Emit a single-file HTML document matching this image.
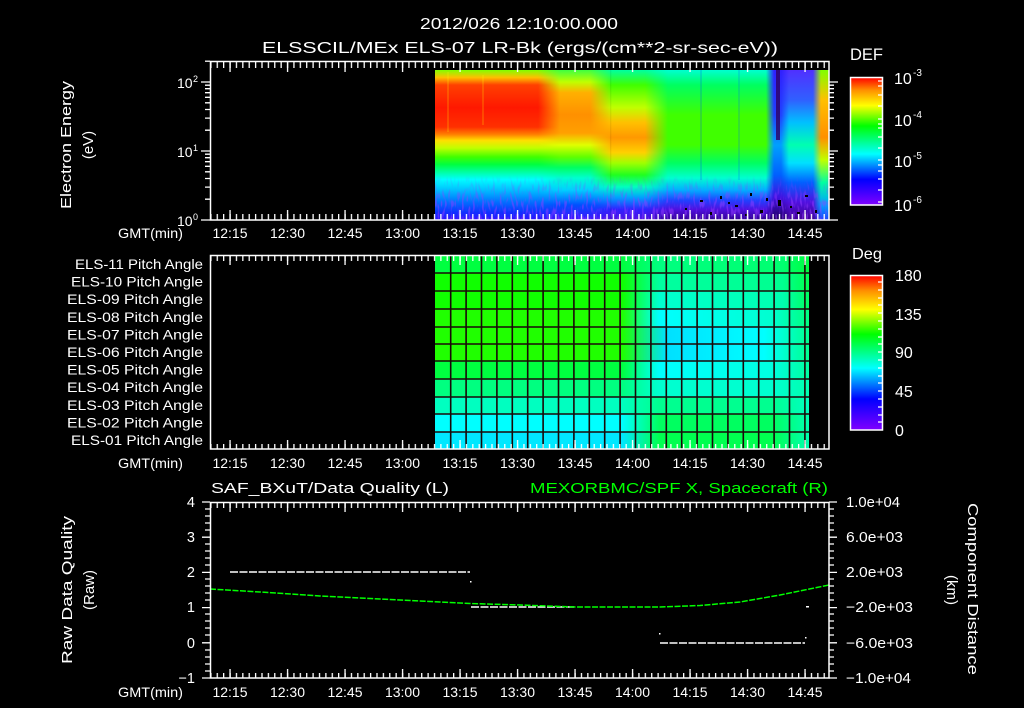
<!DOCTYPE html>
<html><head><meta charset="utf-8"><style>
html,body{margin:0;padding:0;background:#000;}
svg{display:block;}
text{font-family:"Liberation Sans",sans-serif;fill:#fff;}
</style></head><body>
<svg width="1024" height="708" viewBox="0 0 1024 708" xmlns="http://www.w3.org/2000/svg">
<defs>
<pattern id="mn" patternUnits="userSpaceOnUse" x="229.4" y="0" width="6.389" height="800"><rect x="0" y="0" width="1.3" height="800" fill="#fff"/></pattern>
<pattern id="mj" patternUnits="userSpaceOnUse" x="229.4" y="0" width="57.5" height="800"><rect x="0" y="0" width="1.3" height="800" fill="#fff"/></pattern>
<linearGradient id="gA" x1="0" y1="0" x2="0" y2="1">
<stop offset="0" stop-color="#80ff00"/><stop offset=".05" stop-color="#ffc000"/><stop offset=".1" stop-color="#ff4000"/><stop offset=".25" stop-color="#ff1800"/><stop offset=".38" stop-color="#ff3000"/><stop offset=".43" stop-color="#ff8000"/><stop offset=".47" stop-color="#ffe000"/><stop offset=".52" stop-color="#c0ff00"/><stop offset=".58" stop-color="#40ff00"/><stop offset=".63" stop-color="#00ff40"/><stop offset=".68" stop-color="#00ffa0"/><stop offset=".73" stop-color="#00ffff"/><stop offset=".8" stop-color="#00c0ff"/><stop offset=".88" stop-color="#0070ff"/><stop offset=".95" stop-color="#1030ff"/><stop offset="1" stop-color="#3010ff"/></linearGradient>
<linearGradient id="gB" x1="0" y1="0" x2="0" y2="1">
<stop offset="0" stop-color="#40ff40"/><stop offset=".08" stop-color="#c0ff00"/><stop offset=".15" stop-color="#ffb000"/><stop offset=".3" stop-color="#ff9000"/><stop offset=".42" stop-color="#ffa000"/><stop offset=".5" stop-color="#e0ff00"/><stop offset=".58" stop-color="#60ff00"/><stop offset=".65" stop-color="#00ff60"/><stop offset=".72" stop-color="#00ffd0"/><stop offset=".8" stop-color="#00d0ff"/><stop offset=".9" stop-color="#0050ff"/><stop offset="1" stop-color="#4010ff"/></linearGradient>
<linearGradient id="gC" x1="0" y1="0" x2="0" y2="1">
<stop offset="0" stop-color="#00ffa0"/><stop offset=".1" stop-color="#40ff00"/><stop offset=".25" stop-color="#c0ff00"/><stop offset=".35" stop-color="#ffc000"/><stop offset=".45" stop-color="#ff9800"/><stop offset=".55" stop-color="#ffd000"/><stop offset=".62" stop-color="#a0ff00"/><stop offset=".7" stop-color="#20ff20"/><stop offset=".78" stop-color="#00ffc0"/><stop offset=".85" stop-color="#00a0ff"/><stop offset=".93" stop-color="#3020ff"/><stop offset="1" stop-color="#5010e0"/></linearGradient>
<linearGradient id="gD" x1="0" y1="0" x2="0" y2="1">
<stop offset="0" stop-color="#00ffd0"/><stop offset=".1" stop-color="#00ff60"/><stop offset=".3" stop-color="#40ff00"/><stop offset=".5" stop-color="#40ff00"/><stop offset=".62" stop-color="#00ff60"/><stop offset=".72" stop-color="#00ffd0"/><stop offset=".8" stop-color="#00b0ff"/><stop offset=".87" stop-color="#2040ff"/><stop offset=".93" stop-color="#5010e0"/><stop offset="1" stop-color="#300090"/></linearGradient>
<linearGradient id="gE" x1="0" y1="0" x2="0" y2="1">
<stop offset="0" stop-color="#3020ff"/><stop offset=".3" stop-color="#2040ff"/><stop offset=".5" stop-color="#00a0ff"/><stop offset=".7" stop-color="#0060ff"/><stop offset=".85" stop-color="#4010e0"/><stop offset="1" stop-color="#200060"/></linearGradient>
<linearGradient id="gF" x1="0" y1="0" x2="0" y2="1">
<stop offset="0" stop-color="#5030ff"/><stop offset=".2" stop-color="#3060ff"/><stop offset=".35" stop-color="#00c0ff"/><stop offset=".5" stop-color="#00ffb0"/><stop offset=".62" stop-color="#00e0ff"/><stop offset=".75" stop-color="#0060ff"/><stop offset=".88" stop-color="#5010e0"/><stop offset="1" stop-color="#400090"/></linearGradient>
<linearGradient id="gG" x1="0" y1="0" x2="0" y2="1">
<stop offset="0" stop-color="#80ff00"/><stop offset=".2" stop-color="#ffc000"/><stop offset=".45" stop-color="#ff9000"/><stop offset=".6" stop-color="#c0ff00"/><stop offset=".75" stop-color="#00ffa0"/><stop offset=".9" stop-color="#00a0ff"/><stop offset="1" stop-color="#2040ff"/></linearGradient>
<linearGradient id="fB" gradientUnits="userSpaceOnUse" x1="538" y1="0" x2="560" y2="0"><stop offset="0" stop-color="#000"/><stop offset="1" stop-color="#fff"/></linearGradient>
<linearGradient id="fC" gradientUnits="userSpaceOnUse" x1="590" y1="0" x2="612" y2="0"><stop offset="0" stop-color="#000"/><stop offset="1" stop-color="#fff"/></linearGradient>
<linearGradient id="fD" gradientUnits="userSpaceOnUse" x1="645" y1="0" x2="668" y2="0"><stop offset="0" stop-color="#000"/><stop offset="1" stop-color="#fff"/></linearGradient>
<linearGradient id="fE" gradientUnits="userSpaceOnUse" x1="766" y1="0" x2="774" y2="0"><stop offset="0" stop-color="#000"/><stop offset="1" stop-color="#fff"/></linearGradient>
<linearGradient id="fF" gradientUnits="userSpaceOnUse" x1="781" y1="0" x2="789" y2="0"><stop offset="0" stop-color="#000"/><stop offset="1" stop-color="#fff"/></linearGradient>
<linearGradient id="fG" gradientUnits="userSpaceOnUse" x1="813" y1="0" x2="821" y2="0"><stop offset="0" stop-color="#000"/><stop offset="1" stop-color="#fff"/></linearGradient>
<mask id="mB" maskUnits="userSpaceOnUse" x="0" y="0" width="1024" height="708"><rect x="538" y="70" width="72" height="150" fill="url(#fB)"/></mask>
<mask id="mC" maskUnits="userSpaceOnUse" x="0" y="0" width="1024" height="708"><rect x="590" y="70" width="78" height="150" fill="url(#fC)"/></mask>
<mask id="mD" maskUnits="userSpaceOnUse" x="0" y="0" width="1024" height="708"><rect x="645" y="70" width="130" height="150" fill="url(#fD)"/></mask>
<mask id="mE" maskUnits="userSpaceOnUse" x="0" y="0" width="1024" height="708"><rect x="766" y="70" width="24" height="150" fill="url(#fE)"/></mask>
<mask id="mF" maskUnits="userSpaceOnUse" x="0" y="0" width="1024" height="708"><rect x="781" y="70" width="40" height="150" fill="url(#fF)"/></mask>
<mask id="mG" maskUnits="userSpaceOnUse" x="0" y="0" width="1024" height="708"><rect x="813" y="70" width="16" height="150" fill="url(#fG)"/></mask>
<linearGradient id="nf" x1="0" y1="0" x2="0" y2="1"><stop offset="0" stop-color="#000"/><stop offset=".6" stop-color="#fff"/><stop offset="1" stop-color="#fff"/></linearGradient>
<mask id="mN" maskUnits="userSpaceOnUse" x="0" y="0" width="1024" height="708"><rect x="435" y="175" width="394" height="45" fill="url(#nf)"/></mask>
<filter id="noise" x="0" y="0" width="100%" height="100%">
<feTurbulence type="fractalNoise" baseFrequency="0.45 0.12" numOctaves="1" seed="3"/>
<feColorMatrix type="matrix" values="0 0 0 0 0.3  0 0 0 0 0.05  0 0 0 0 1  6 0 0 0 -3"/>
</filter>
<linearGradient id="cb" x1="0" y1="1" x2="0" y2="0">
<stop offset="0" stop-color="#8000ff"/><stop offset=".2" stop-color="#0000ff"/><stop offset=".4" stop-color="#00ffff"/><stop offset=".62" stop-color="#00ff00"/><stop offset=".78" stop-color="#ffff00"/><stop offset=".9" stop-color="#ff9000"/><stop offset="1" stop-color="#ff0000"/></linearGradient>
<linearGradient id="r1" gradientUnits="userSpaceOnUse" x1="435" y1="0" x2="809" y2="0"><stop offset=".5" stop-color="#00ff40"/><stop offset=".6" stop-color="#00ff80"/><stop offset=".93" stop-color="#00ff70"/><stop offset="1" stop-color="#00ff40"/></linearGradient>
<linearGradient id="r2" gradientUnits="userSpaceOnUse" x1="435" y1="0" x2="809" y2="0"><stop offset=".5" stop-color="#10ff00"/><stop offset=".6" stop-color="#00ffa0"/><stop offset=".93" stop-color="#00ff90"/><stop offset="1" stop-color="#00ff50"/></linearGradient>
<linearGradient id="r3" gradientUnits="userSpaceOnUse" x1="435" y1="0" x2="809" y2="0"><stop offset=".5" stop-color="#10ff00"/><stop offset=".6" stop-color="#00ffd0"/><stop offset=".93" stop-color="#00ffb0"/><stop offset="1" stop-color="#00ff60"/></linearGradient>
<linearGradient id="r4" gradientUnits="userSpaceOnUse" x1="435" y1="0" x2="809" y2="0"><stop offset=".5" stop-color="#20ff00"/><stop offset=".6" stop-color="#00ffff"/><stop offset=".9" stop-color="#00ffd0"/><stop offset="1" stop-color="#00ff80"/></linearGradient>
<linearGradient id="r5" gradientUnits="userSpaceOnUse" x1="435" y1="0" x2="809" y2="0"><stop offset=".5" stop-color="#20ff00"/><stop offset=".62" stop-color="#00e0ff"/><stop offset=".88" stop-color="#00ffff"/><stop offset="1" stop-color="#00ff90"/></linearGradient>
<linearGradient id="r6" gradientUnits="userSpaceOnUse" x1="435" y1="0" x2="809" y2="0"><stop offset=".5" stop-color="#20ff00"/><stop offset=".62" stop-color="#00e0ff"/><stop offset=".88" stop-color="#00ffff"/><stop offset="1" stop-color="#00ff90"/></linearGradient>
<linearGradient id="r7" gradientUnits="userSpaceOnUse" x1="435" y1="0" x2="809" y2="0"><stop offset=".5" stop-color="#00ff40"/><stop offset=".6" stop-color="#00ffff"/><stop offset=".9" stop-color="#00ffe0"/><stop offset="1" stop-color="#00ffa0"/></linearGradient>
<linearGradient id="r8" gradientUnits="userSpaceOnUse" x1="435" y1="0" x2="809" y2="0"><stop offset=".5" stop-color="#00ff80"/><stop offset=".6" stop-color="#00ffd0"/><stop offset=".9" stop-color="#00ffd0"/><stop offset="1" stop-color="#00ffb0"/></linearGradient>
<linearGradient id="r9" gradientUnits="userSpaceOnUse" x1="435" y1="0" x2="809" y2="0"><stop offset=".5" stop-color="#00ffc0"/><stop offset=".6" stop-color="#00ff90"/><stop offset=".9" stop-color="#00ff90"/><stop offset="1" stop-color="#00ffc0"/></linearGradient>
<linearGradient id="r10" gradientUnits="userSpaceOnUse" x1="435" y1="0" x2="809" y2="0"><stop offset=".5" stop-color="#00ffff"/><stop offset=".6" stop-color="#00ff60"/><stop offset=".9" stop-color="#00ff60"/><stop offset="1" stop-color="#00ffb0"/></linearGradient>
<linearGradient id="r11" gradientUnits="userSpaceOnUse" x1="435" y1="0" x2="809" y2="0"><stop offset=".5" stop-color="#00e8ff"/><stop offset=".6" stop-color="#00ff50"/><stop offset=".9" stop-color="#00ff50"/><stop offset="1" stop-color="#00ffb0"/></linearGradient>
</defs>

<text x="420" y="29" font-size="16" textLength="198" lengthAdjust="spacingAndGlyphs">2012/026 12:10:00.000</text>
<text x="262" y="53" font-size="16" textLength="516" lengthAdjust="spacingAndGlyphs">ELSSCIL/MEx ELS-07 LR-Bk  (ergs/(cm**2-sr-sec-eV))</text>

<rect x="435" y="70" width="125" height="150" fill="url(#gA)"/>
<rect x="538" y="70" width="74" height="150" fill="url(#gB)" mask="url(#mB)"/>
<rect x="590" y="70" width="78" height="150" fill="url(#gC)" mask="url(#mC)"/>
<rect x="645" y="70" width="130" height="150" fill="url(#gD)" mask="url(#mD)"/>
<rect x="766" y="70" width="24" height="150" fill="url(#gE)" mask="url(#mE)"/>
<rect x="781" y="70" width="40" height="150" fill="url(#gF)" mask="url(#mF)"/>
<rect x="813" y="70" width="16" height="150" fill="url(#gG)" mask="url(#mG)"/>
<g opacity=".18">
<rect x="447" y="72" width="2" height="60" fill="#ffff00"/>
<rect x="482" y="75" width="2" height="50" fill="#ffff00"/>
<rect x="700" y="70" width="2" height="110" fill="#0040ff"/>
<rect x="738" y="70" width="2" height="110" fill="#0060ff"/>
</g>
<g mask="url(#mN)"><rect x="435" y="175" width="394" height="45" filter="url(#noise)" opacity=".5"/></g>
<rect x="776" y="70" width="4" height="70" fill="#300060" opacity=".8"/>
<g fill="#000">
<rect x="700" y="200" width="3" height="2"/><rect x="720" y="196" width="2" height="3"/><rect x="735" y="205" width="3" height="2"/>
<rect x="750" y="193" width="2" height="3"/><rect x="760" y="210" width="3" height="3"/><rect x="778" y="200" width="3" height="6"/>
<rect x="790" y="206" width="2" height="2"/><rect x="805" y="195" width="3" height="2"/><rect x="815" y="210" width="2" height="3"/>
<rect x="745" y="214" width="3" height="2"/><rect x="710" y="212" width="2" height="3"/><rect x="685" y="208" width="2" height="2"/>
<rect x="728" y="202" width="2" height="2"/><rect x="766" y="198" width="2" height="3"/><rect x="797" y="212" width="3" height="2"/>
</g>
<rect x="210.5" y="61.5" width="618.5" height="158.5" fill="none" stroke="#fff" stroke-width="1.5"/>
<rect x="210" y="62" width="619" height="6" fill="url(#mn)"/>
<rect x="210" y="62" width="619" height="10" fill="url(#mj)"/>
<rect x="210" y="214" width="619" height="6" fill="url(#mn)"/>
<rect x="210" y="210" width="619" height="10" fill="url(#mj)"/>
<g stroke="#fff" stroke-width="1.3">
<path d="M201 220H210M201 151H210M201 82H210"/>
<path d="M205 199.2H210M205 187.1H210M205 178.5H210M205 171.8H210M205 166.3H210M205 161.7H210M205 157.7H210M205 154.2H210"/>
<path d="M205 130.2H210M205 118.1H210M205 109.5H210M205 102.8H210M205 97.3H210M205 92.7H210M205 88.7H210M205 85.2H210"/>
<path d="M205 61.2H210"/>
<path d="M829 220H838M829 151H838M829 82H838"/>
<path d="M829 199.2H834M829 187.1H834M829 178.5H834M829 171.8H834M829 166.3H834M829 161.7H834M829 157.7H834M829 154.2H834"/>
<path d="M829 130.2H834M829 118.1H834M829 109.5H834M829 102.8H834M829 97.3H834M829 92.7H834M829 88.7H834M829 85.2H834"/>
</g>
<text x="177" y="88" font-size="14">10</text><text x="193" y="82" font-size="9">2</text>
<text x="177" y="157" font-size="14">10</text><text x="193" y="151" font-size="9">1</text>
<text x="177" y="226" font-size="14">10</text><text x="193" y="220" font-size="9">0</text>
<text transform="translate(71,145) rotate(-90)" text-anchor="middle" font-size="15" textLength="128" lengthAdjust="spacingAndGlyphs">Electron Energy</text>
<text transform="translate(93,145) rotate(-90)" text-anchor="middle" font-size="15">(eV)</text>

<rect x="850.5" y="77.5" width="32" height="127.5" fill="url(#cb)" stroke="#fff" stroke-width="1.5"/>
<g stroke="#fff" stroke-width="1.2">
<path d="M878 81H882M878 86H882M878 95H882M878 106H882M878 119H882M878 124H882M878 128H882M878 137H882M878 148H882M878 160H882M878 165H882M878 171H882M878 179H882M878 190H882M878 202H882"/>
</g>
<text x="850" y="60" font-size="17" textLength="33" lengthAdjust="spacingAndGlyphs">DEF</text>
<text x="894" y="84" font-size="16">10</text><text x="913" y="76" font-size="10">-3</text>
<text x="894" y="126" font-size="16">10</text><text x="913" y="118" font-size="10">-4</text>
<text x="894" y="167" font-size="16">10</text><text x="913" y="159" font-size="10">-5</text>
<text x="894" y="211" font-size="16">10</text><text x="913" y="203" font-size="10">-6</text>

<g font-size="14" text-anchor="middle">
<text x="230" y="238">12:15</text><text x="287.5" y="238">12:30</text><text x="345" y="238">12:45</text><text x="402.5" y="238">13:00</text><text x="460" y="238">13:15</text><text x="517.5" y="238">13:30</text><text x="575" y="238">13:45</text><text x="632.5" y="238">14:00</text><text x="690" y="238">14:15</text><text x="747.5" y="238">14:30</text><text x="805" y="238">14:45</text>
</g>
<text x="118" y="238" font-size="14" textLength="65" lengthAdjust="spacingAndGlyphs">GMT(min)</text>

<rect x="435" y="256" width="374" height="17" fill="url(#r1)"/>
<rect x="435" y="273" width="374" height="18" fill="url(#r2)"/>
<rect x="435" y="291" width="374" height="18" fill="url(#r3)"/>
<rect x="435" y="309" width="374" height="18" fill="url(#r4)"/>
<rect x="435" y="327" width="374" height="17" fill="url(#r5)"/>
<rect x="435" y="344" width="374" height="17" fill="url(#r6)"/>
<rect x="435" y="361" width="374" height="18" fill="url(#r7)"/>
<rect x="435" y="379" width="374" height="18" fill="url(#r8)"/>
<rect x="435" y="397" width="374" height="17" fill="url(#r9)"/>
<rect x="435" y="414" width="374" height="18" fill="url(#r10)"/>
<rect x="435" y="432" width="374" height="17" fill="url(#r11)"/>
<g stroke="#1a0808" stroke-width="1.6">
<path d="M435 273H809M435 291H809M435 309H809M435 327H809M435 344H809M435 361H809M435 379H809M435 397H809M435 414H809M435 432H809"/>
<path d="M450.7 256V449M466.1 256V449M481.5 256V449M496.9 256V449M512.3 256V449M527.7 256V449M543.1 256V449M558.5 256V449M573.9 256V449M589.3 256V449M604.7 256V449M620.1 256V449M635.5 256V449M650.9 256V449M666.3 256V449M681.7 256V449M697.1 256V449M712.5 256V449M727.9 256V449M743.3 256V449M758.7 256V449M774.1 256V449M789.5 256V449M804.9 256V449"/>
</g>
<rect x="210.5" y="255.5" width="618.5" height="193.5" fill="none" stroke="#fff" stroke-width="1.5"/>
<rect x="210" y="256" width="619" height="5" fill="url(#mn)"/>
<rect x="210" y="256" width="619" height="9" fill="url(#mj)"/>
<rect x="210" y="444" width="619" height="5" fill="url(#mn)"/>
<rect x="210" y="440" width="619" height="9" fill="url(#mj)"/>

<g font-size="14" text-anchor="end">
<text x="203" y="269" textLength="128" lengthAdjust="spacingAndGlyphs">ELS-11 Pitch Angle</text>
<text x="203" y="286.6" textLength="132" lengthAdjust="spacingAndGlyphs">ELS-10 Pitch Angle</text>
<text x="203" y="304.2" textLength="136" lengthAdjust="spacingAndGlyphs">ELS-09 Pitch Angle</text>
<text x="203" y="321.8" textLength="136" lengthAdjust="spacingAndGlyphs">ELS-08 Pitch Angle</text>
<text x="203" y="339.4" textLength="136" lengthAdjust="spacingAndGlyphs">ELS-07 Pitch Angle</text>
<text x="203" y="357" textLength="136" lengthAdjust="spacingAndGlyphs">ELS-06 Pitch Angle</text>
<text x="203" y="374.6" textLength="136" lengthAdjust="spacingAndGlyphs">ELS-05 Pitch Angle</text>
<text x="203" y="392.2" textLength="136" lengthAdjust="spacingAndGlyphs">ELS-04 Pitch Angle</text>
<text x="203" y="409.8" textLength="136" lengthAdjust="spacingAndGlyphs">ELS-03 Pitch Angle</text>
<text x="203" y="427.4" textLength="136" lengthAdjust="spacingAndGlyphs">ELS-02 Pitch Angle</text>
<text x="203" y="445" textLength="132" lengthAdjust="spacingAndGlyphs">ELS-01 Pitch Angle</text>
</g>

<rect x="850.5" y="275.5" width="32" height="154.5" fill="url(#cb)" stroke="#fff" stroke-width="1.5"/>
<g stroke="#fff" stroke-width="1.2">
<path d="M878 282H882M878 290H882M878 298H882M878 305H882M878 313H882M878 321H882M878 329H882M878 337H882M878 344H882M878 352H882M878 360H882M878 368H882M878 376H882M878 383H882M878 391H882M878 399H882M878 407H882M878 415H882M878 422H882"/>
</g>
<text x="852" y="259" font-size="16" textLength="30" lengthAdjust="spacingAndGlyphs">Deg</text>
<g font-size="16">
<text x="895" y="281">180</text><text x="895" y="320">135</text><text x="895" y="358">90</text><text x="895" y="397">45</text><text x="895" y="436">0</text>
</g>

<g font-size="14" text-anchor="middle">
<text x="230" y="468">12:15</text><text x="287.5" y="468">12:30</text><text x="345" y="468">12:45</text><text x="402.5" y="468">13:00</text><text x="460" y="468">13:15</text><text x="517.5" y="468">13:30</text><text x="575" y="468">13:45</text><text x="632.5" y="468">14:00</text><text x="690" y="468">14:15</text><text x="747.5" y="468">14:30</text><text x="805" y="468">14:45</text>
</g>
<text x="118" y="468" font-size="14" textLength="65" lengthAdjust="spacingAndGlyphs">GMT(min)</text>

<text x="211" y="493" font-size="15" textLength="238" lengthAdjust="spacingAndGlyphs">SAF_BXuT/Data Quality (L)</text>
<text x="530" y="493" font-size="15" style="fill:#00ff00" textLength="298" lengthAdjust="spacingAndGlyphs">MEXORBMC/SPF X, Spacecraft (R)</text>

<g stroke="#fff" stroke-width="1.5" fill="none">
<path d="M230 572H470" stroke-dasharray="8 1.5"/>
<path d="M471 607H575" stroke-dasharray="8 1.5"/>
<path d="M660 643H805" stroke-dasharray="8 1.5"/>
</g>
<g fill="#fff"><rect x="470" y="581" width="1.5" height="1.5"/><rect x="659" y="633" width="1.5" height="1.5"/><rect x="805" y="637" width="1.5" height="1.5"/><rect x="806" y="606" width="3" height="1.5"/></g>
<polyline points="210,589 260,592 320,596 380,599 440,602 470,603.5 520,605 575,607 660,607 700,605.5 740,602 780,595 829,585" fill="none" stroke="#00ff00" stroke-width="1.5" stroke-dasharray="6 1.5"/>

<rect x="210.5" y="502.5" width="618.5" height="175.5" fill="none" stroke="#fff" stroke-width="1.5"/>
<rect x="210" y="503" width="619" height="5" fill="url(#mn)"/>
<rect x="210" y="503" width="619" height="9" fill="url(#mj)"/>
<rect x="210" y="673" width="619" height="5" fill="url(#mn)"/>
<rect x="210" y="669" width="619" height="9" fill="url(#mj)"/>
<g stroke="#fff" stroke-width="1.3">
<path d="M202 502H210M202 537.2H210M202 572.4H210M202 607.6H210M202 642.8H210M202 678H210"/>
<path d="M205 509H210M205 516H210M205 523H210M205 530H210M205 544H210M205 551H210M205 558H210M205 565H210M205 579H210M205 586H210M205 593H210M205 600H210M205 614H210M205 621H210M205 628H210M205 635H210M205 650H210M205 657H210M205 664H210M205 671H210"/>
<path d="M829 502H837M829 537.2H837M829 572.4H837M829 607.6H837M829 642.8H837M829 678H837"/>
<path d="M829 509H834M829 516H834M829 523H834M829 530H834M829 544H834M829 551H834M829 558H834M829 565H834M829 579H834M829 586H834M829 593H834M829 600H834M829 614H834M829 621H834M829 628H834M829 635H834M829 650H834M829 657H834M829 664H834M829 671H834"/>
</g>
<g font-size="14.5" text-anchor="end">
<text x="195" y="507">4</text><text x="195" y="542">3</text><text x="195" y="577">2</text><text x="195" y="612">1</text><text x="195" y="648">0</text><text x="195" y="683">−1</text>
</g>
<g font-size="14.5">
<text x="846" y="507" textLength="54" lengthAdjust="spacingAndGlyphs">1.0e+04</text><text x="846" y="542" textLength="57" lengthAdjust="spacingAndGlyphs">6.0e+03</text><text x="846" y="577" textLength="57" lengthAdjust="spacingAndGlyphs">2.0e+03</text><text x="846" y="612" textLength="67" lengthAdjust="spacingAndGlyphs">−2.0e+03</text><text x="846" y="648" textLength="67" lengthAdjust="spacingAndGlyphs">−6.0e+03</text><text x="846" y="683" textLength="65" lengthAdjust="spacingAndGlyphs">−1.0e+04</text>
</g>
<text transform="translate(72,590) rotate(-90)" text-anchor="middle" font-size="15" textLength="148" lengthAdjust="spacingAndGlyphs">Raw Data Quality</text>
<text transform="translate(94,590) rotate(-90)" text-anchor="middle" font-size="15">(Raw)</text>
<text transform="translate(968,589) rotate(90)" text-anchor="middle" font-size="15" textLength="172" lengthAdjust="spacingAndGlyphs">Component Distance</text>
<text transform="translate(947,590) rotate(90)" text-anchor="middle" font-size="15">(km)</text>

<g font-size="14" text-anchor="middle">
<text x="230" y="697">12:15</text><text x="287.5" y="697">12:30</text><text x="345" y="697">12:45</text><text x="402.5" y="697">13:00</text><text x="460" y="697">13:15</text><text x="517.5" y="697">13:30</text><text x="575" y="697">13:45</text><text x="632.5" y="697">14:00</text><text x="690" y="697">14:15</text><text x="747.5" y="697">14:30</text><text x="805" y="697">14:45</text>
</g>
<text x="118" y="697" font-size="14" textLength="65" lengthAdjust="spacingAndGlyphs">GMT(min)</text>
</svg>
</body></html>
